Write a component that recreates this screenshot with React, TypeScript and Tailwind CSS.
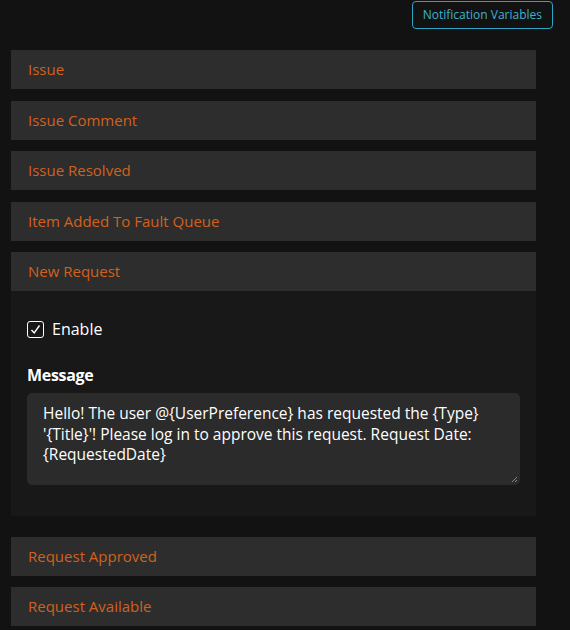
import React from 'react'

const sections = ['Issue', 'Issue Comment', 'Issue Resolved', 'Item Added To Fault Queue']
const after = ['Request Approved', 'Request Available']

const Header = ({ title }: { title: string }) => (
  <div className="h-[39px] bg-[#2d2d2d] flex items-center pl-[17px] text-[15px] text-[#d2611c]">
    {title}
  </div>
)

const App = () => {
  return (
    <div className="w-[570px] h-[630px] overflow-hidden bg-[#121212] font-['Open_Sans',sans-serif]">
      <div className="flex justify-end pr-[17px] pt-[1px] h-[50px]">
        <button className="h-[28px] px-[10px] rounded-[4px] border border-[#2fa3c4] text-[12px] text-[#3db1d3]">
          Notification Variables
        </button>
      </div>
      <div className="ml-[11px] w-[525px] flex flex-col gap-[11.5px]">
        {sections.map((s) => (
          <Header key={s} title={s} />
        ))}
        <div>
          <Header title="New Request" />
          <div className="bg-[#181818] h-[225px] px-[16px] pt-[26px]">
            <label className="flex items-center gap-[8px] text-[16px] leading-[24px] text-white">
              <span className="w-[17px] h-[17px] rounded-[3px] border-[1.5px] border-white flex items-center justify-center">
                <svg width="11" height="11" viewBox="0 0 11 11" fill="none">
                  <path d="M1.5 6 L4.2 9 L9.5 1.5" stroke="white" strokeWidth="1.4" />
                </svg>
              </span>
              Enable
            </label>
            <div className="mt-[22px] text-[16px] leading-[24px] font-bold text-white tracking-[-0.3px]">Message</div>
            <div className="relative mt-[6px] w-[493px] h-[92px] rounded-[5px] bg-[#2b2b2b] pl-[16px] pr-[12px] pt-[10px] text-[15.5px] leading-[20.5px] text-white">
              Hello! The user @{'{UserPreference}'} has requested the {'{Type}'} '{'{Title}'}'! Please log in to approve this request. Request Date: {'{RequestedDate}'}
              <svg className="absolute right-[2px] bottom-[2px]" width="7" height="7" viewBox="0 0 7 7">
                <path d="M6 1 L1 6 M6 4 L4 6" stroke="#888" strokeWidth="1" />
              </svg>
            </div>
          </div>
        </div>
        <div className="mt-[9px] flex flex-col gap-[11.5px]">
          {after.map((s) => (
            <Header key={s} title={s} />
          ))}
        </div>
      </div>
    </div>
  )
}

export default App
